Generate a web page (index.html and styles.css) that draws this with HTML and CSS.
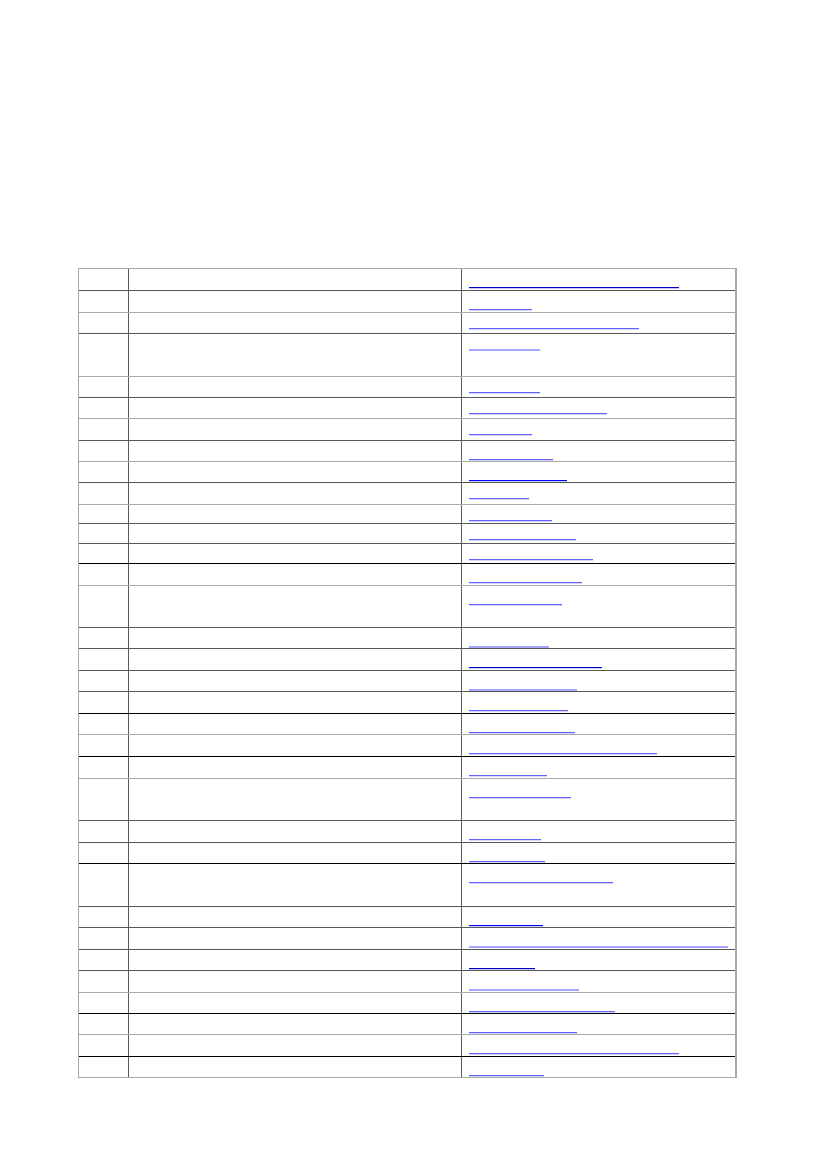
FILE: index.html
```html
<!DOCTYPE html>
<html lang="en">
<head>
<meta charset="utf-8">
<title>Table</title>
<link rel="stylesheet" href="styles.css">
</head>
<body>
<div class="sheet">
  <div class="tbl">
    <div class="row h22 bd-dark"><div class="c1"></div><div class="c2"></div><div class="c3"><span class="u k-dark" style="width:210px"></span></div></div>
    <div class="row h22 bd-light"><div class="c1"></div><div class="c2"></div><div class="c3"><span class="u k-mid" style="width:63px"></span></div></div>
    <div class="row h21 bd-dark"><div class="c1"></div><div class="c2"></div><div class="c3 up"><span class="u k-mid" style="width:170px"></span></div></div>
    <div class="row h43 bd-light"><div class="c1"></div><div class="c2"></div><div class="c3 up"><span class="u k-light" style="width:71px"></span></div></div>
    <div class="row h21 bd-dark"><div class="c1"></div><div class="c2"></div><div class="c3 up"><span class="u k-mid" style="width:71px"></span></div></div>
    <div class="row h21 bd-light"><div class="c1"></div><div class="c2"></div><div class="c3 up"><span class="u k-mid" style="width:138px"></span></div></div>
    <div class="row h22 bd-dark"><div class="c1"></div><div class="c2"></div><div class="c3 up"><span class="u k-mid" style="width:63px"></span></div></div>
    <div class="row h21 bd-light"><div class="c1"></div><div class="c2"></div><div class="c3"><span class="u k-mid" style="width:84px"></span></div></div>
    <div class="row h21 bd-dark"><div class="c1"></div><div class="c2"></div><div class="c3"><span class="u k-blue" style="width:98px"></span></div></div>
    <div class="row h22 bd-light"><div class="c1"></div><div class="c2"></div><div class="c3 up"><span class="u k-mid" style="width:60px"></span></div></div>
    <div class="row h19 bd-dark"><div class="c1"></div><div class="c2"></div><div class="c3 up"><span class="u k-mid" style="width:83px"></span></div></div>
    <div class="row h20 bd-dark"><div class="c1"></div><div class="c2"></div><div class="c3 up"><span class="u k-mid" style="width:107px"></span></div></div>
    <div class="row h20 bd-black"><div class="c1"></div><div class="c2"></div><div class="c3 up"><span class="u k-mid" style="width:124px"></span></div></div>
    <div class="row h22 bd-light"><div class="c1"></div><div class="c2"></div><div class="c3"><span class="u k-mid" style="width:113px"></span></div></div>
    <div class="row h42 bd-dark"><div class="c1"></div><div class="c2"></div><div class="c3"><span class="u k-mid" style="width:93px"></span></div></div>
    <div class="row h21 bd-dark"><div class="c1"></div><div class="c2"></div><div class="c3"><span class="u k-light" style="width:80px"></span></div></div>
    <div class="row h22 bd-dark"><div class="c1"></div><div class="c2"></div><div class="c3"><span class="u k-dark" style="width:133px"></span></div></div>
    <div class="row h21 bd-dark"><div class="c1"></div><div class="c2"></div><div class="c3"><span class="u k-light" style="width:108px"></span></div></div>
    <div class="row h22 bd-black"><div class="c1"></div><div class="c2"></div><div class="c3"><span class="u k-mid" style="width:99px"></span></div></div>
    <div class="row h21 bd-light"><div class="c1"></div><div class="c2"></div><div class="c3"><span class="u k-mid" style="width:106px"></span></div></div>
    <div class="row h22 bd-black"><div class="c1"></div><div class="c2"></div><div class="c3"><span class="u k-mid" style="width:188px"></span></div></div>
    <div class="row h22 bd-light"><div class="c1"></div><div class="c2"></div><div class="c3"><span class="u k-mid" style="width:78px"></span></div></div>
    <div class="row h42 bd-dark"><div class="c1"></div><div class="c2"></div><div class="c3"><span class="u k-mid" style="width:102px"></span></div></div>
    <div class="row h22 bd-dark"><div class="c1"></div><div class="c2"></div><div class="c3"><span class="u k-mid" style="width:72px"></span></div></div>
    <div class="row h21 bd-black"><div class="c1"></div><div class="c2"></div><div class="c3"><span class="u k-mid" style="width:76px"></span></div></div>
    <div class="row h43 bd-dark"><div class="c1"></div><div class="c2"></div><div class="c3"><span class="u k-mid" style="width:144px"></span></div></div>
    <div class="row h21 bd-dark"><div class="c1"></div><div class="c2"></div><div class="c3"><span class="u k-blue" style="width:74px"></span></div></div>
    <div class="row h22 bd-dark"><div class="c1"></div><div class="c2"></div><div class="c3"><span class="u k-light" style="width:259px"></span></div></div>
    <div class="row h21 bd-dark"><div class="c1"></div><div class="c2"></div><div class="c3"><span class="u k-dark" style="width:66px"></span></div></div>
    <div class="row h22 bd-light"><div class="c1"></div><div class="c2"></div><div class="c3"><span class="u k-light" style="width:110px"></span></div></div>
    <div class="row h21 bd-black"><div class="c1"></div><div class="c2"></div><div class="c3"><span class="u k-mid" style="width:146px"></span></div></div>
    <div class="row h21 bd-light"><div class="c1"></div><div class="c2"></div><div class="c3"><span class="u k-mid" style="width:108px"></span></div></div>
    <div class="row h22 bd-black"><div class="c1"></div><div class="c2"></div><div class="c3"><span class="u k-mid" style="width:210px"></span></div></div>
    <div class="row h21 bd-light"><div class="c1"></div><div class="c2"></div><div class="c3"><span class="u k-mid" style="width:75px"></span></div></div>
  </div>
</div>
</body>
</html>
```

FILE: styles.css
```css
html, body {
  margin: 0;
  padding: 0;
  background: #ffffff;
  font-family: "Liberation Sans", Arial, sans-serif;
}

.sheet {
  padding-top: 268px;
  padding-left: 78px;
}

.tbl {
  box-sizing: border-box;
  width: 659px;
  border-top: 1px solid #a8a8a8;
  border-left: 1px solid #a8a8a8;
  border-right: 2px solid #a8a8a8;
}

.row {
  box-sizing: border-box;
  display: grid;
  grid-template-columns: 50px 333px 1fr;
  border-bottom: 1px solid #575757;
}

.bd-dark { border-bottom-color: #575757; }
.bd-light { border-bottom-color: #a8a8a8; }
.bd-black { border-bottom-color: #000000; }

.h19 { height: 19px; }
.h20 { height: 20px; }
.h21 { height: 21px; }
.h22 { height: 22px; }
.h42 { height: 42px; }
.h43 { height: 43px; }

.c1, .c2 {
  border-right: 1px solid #5a5a5a;
}

.c3 {
  padding: 18px 0 0 7px;
}

.c3.up {
  padding-top: 15px;
}

.u {
  display: block;
  height: 0;
  border-bottom: 1px solid #6060ff;
}

.k-dark {
  border-bottom-color: #0000c0;
  box-shadow: 0 1px 0 #c8c8ff;
}

.k-blue {
  border-bottom-color: #0000ff;
  box-shadow: 0 1px 0 #d0d0ff;
}

.k-mid {
  border-bottom-color: #6262ff;
  box-shadow: 0 1px 0 #d4d4ff;
}

.k-light {
  border-bottom: 2px solid #a6a6ff;
}
```
